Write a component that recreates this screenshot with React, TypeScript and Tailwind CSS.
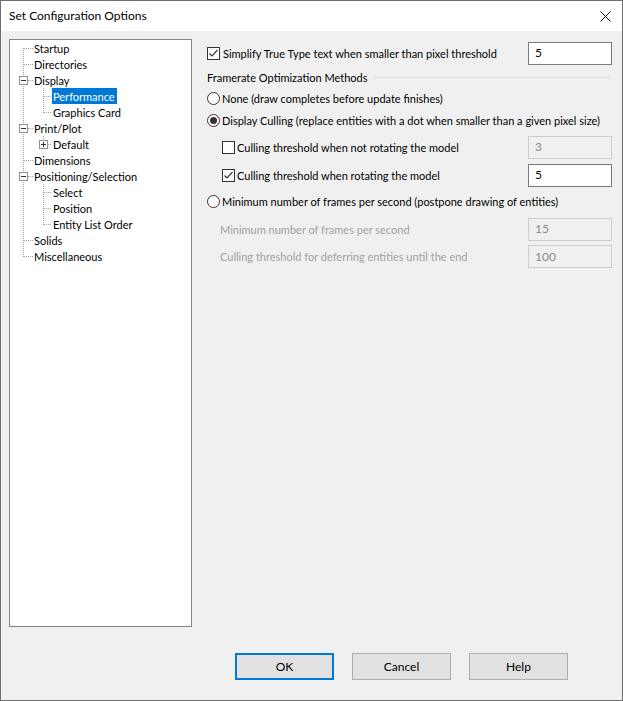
import React from 'react';

const FONT = { fontFamily: '"Segoe UI", Lato, sans-serif' };

type Row = {
  label: string;
  level: 0 | 1;
  root: 'first' | 'mid' | 'last';
  box?: 'minus' | 'plus';
  childDown?: boolean;
  child?: 'mid' | 'last' | 'toBox';
  selected?: boolean;
};

const rows: Row[] = [
  { label: 'Startup', level: 0, root: 'first' },
  { label: 'Directories', level: 0, root: 'mid' },
  { label: 'Display', level: 0, root: 'mid', box: 'minus', childDown: true },
  { label: 'Performance', level: 1, root: 'mid', child: 'mid', selected: true },
  { label: 'Graphics Card', level: 1, root: 'mid', child: 'last' },
  { label: 'Print/Plot', level: 0, root: 'mid', box: 'minus', childDown: true },
  { label: 'Default', level: 1, root: 'mid', child: 'toBox', box: 'plus' },
  { label: 'Dimensions', level: 0, root: 'mid' },
  { label: 'Positioning/Selection', level: 0, root: 'mid', box: 'minus', childDown: true },
  { label: 'Select', level: 1, root: 'mid', child: 'mid' },
  { label: 'Position', level: 1, root: 'mid', child: 'mid' },
  { label: 'Entity List Order', level: 1, root: 'mid', child: 'last' },
  { label: 'Solids', level: 0, root: 'mid' },
  { label: 'Miscellaneous', level: 0, root: 'last' },
];

function ExpandBox({ x, kind }: { x: number; kind: 'minus' | 'plus' }) {
  return (
    <g>
      <rect x={x + 0.5} y={4.5} width={8} height={8} fill="#fff" stroke="#919191" />
      <line x1={x + 2} y1={8.5} x2={x + 7} y2={8.5} stroke="#333" />
      {kind === 'plus' && <line x1={x + 4.5} y1={6} x2={x + 4.5} y2={11} stroke="#333" />}
    </g>
  );
}

function TreeLines({ row }: { row: Row }) {
  const w = row.level === 0 ? 23 : 42;
  const dot = { stroke: '#a0a0a0', strokeDasharray: '1 1' };
  const rootY1 = row.root === 'first' ? 8 : 0;
  const rootY2 = row.root === 'last' ? 9 : 16;
  return (
    <svg width={w} height={16} className="shrink-0" shapeRendering="crispEdges">
      <line x1={13.5} y1={rootY1} x2={13.5} y2={rootY2} {...dot} />
      {row.level === 0 && <line x1={14} y1={8.5} x2={23} y2={8.5} {...dot} />}
      {row.level === 0 && row.childDown && <line x1={33.5} y1={12} x2={33.5} y2={16} {...dot} />}
      {row.level === 0 && row.box && <ExpandBox x={9} kind={row.box} />}
      {row.level === 1 && row.child === 'mid' && <line x1={33.5} y1={0} x2={33.5} y2={16} {...dot} />}
      {row.level === 1 && row.child === 'last' && <line x1={33.5} y1={0} x2={33.5} y2={9} {...dot} />}
      {row.level === 1 && row.child === 'toBox' && <line x1={33.5} y1={0} x2={33.5} y2={4} {...dot} />}
      {row.level === 1 && (
        <line x1={row.box ? 38 : 34} y1={8.5} x2={42} y2={8.5} {...dot} />
      )}
      {row.level === 1 && row.box && <ExpandBox x={29} kind={row.box} />}
    </svg>
  );
}

function Checkbox({ checked }: { checked?: boolean }) {
  return (
    <span className="w-[13px] h-[13px] shrink-0 border border-[#333] bg-white flex items-center justify-center">
      {checked && (
        <svg width="11" height="11" viewBox="0 0 11 11">
          <path d="M1.5 5.5 L4 8 L9.5 2" fill="none" stroke="#333" strokeWidth="1.2" />
        </svg>
      )}
    </span>
  );
}

function Radio({ checked }: { checked?: boolean }) {
  return (
    <span className="w-[13px] h-[13px] shrink-0 rounded-full border border-[#333] bg-white flex items-center justify-center">
      {checked && <span className="w-[7px] h-[7px] rounded-full bg-[#333]" />}
    </span>
  );
}

function Field({ value, disabled }: { value: string; disabled?: boolean }) {
  return (
    <div
      className={`ml-auto w-[84px] h-[23px] shrink-0 flex items-center pl-[6px] border text-[12px] ${
        disabled ? 'border-[#cccccc] bg-[#f0f0f0] text-[#8a8a8a]' : 'border-[#7a7a7a] bg-white text-black'
      }`}
    >
      {value}
    </div>
  );
}

function Button({ label, primary }: { label: string; primary?: boolean }) {
  return (
    <div
      className={`w-[99px] h-[27px] flex items-center justify-center bg-[#e1e1e1] text-[12px] ${
        primary ? 'border-2 border-[#0078d7]' : 'border border-[#adadad]'
      }`}
    >
      {label}
    </div>
  );
}

export default function App() {
  return (
    <div
      className="w-[623px] h-[701px] border border-[#707070] flex flex-col text-[11px] text-black leading-none select-none whitespace-nowrap"
      style={FONT}
    >
      <div className="h-[30px] shrink-0 bg-white flex items-center pl-[8px] pr-[11px]">
        <span className="text-[12px]">Set Configuration Options</span>
        <svg className="ml-auto" width="11" height="11" viewBox="0 0 11 11">
          <path d="M0.5 0.5 L10.5 10.5 M10.5 0.5 L0.5 10.5" stroke="#111" strokeWidth="1" />
        </svg>
      </div>

      <div className="flex-1 bg-[#f0f0f0] flex flex-col pt-[8px]">
        <div className="flex pl-[8px] pr-[10px]">
          <div className="w-[183px] h-[588px] border border-[#82828a] bg-white shrink-0">
            {rows.map((r) => (
              <div key={r.label} className="flex h-[16px] items-center">
                <TreeLines row={r} />
                <span
                  className={`h-[16px] flex items-center pl-[1px] pr-[2px] ${
                    r.selected ? 'bg-[#0078d7] text-white' : ''
                  }`}
                >
                  {r.label}
                </span>
              </div>
            ))}
          </div>

          <div className="flex-1 min-w-0 ml-[15px] flex flex-col pt-[2px]">
            <div className="h-[24px] flex items-center">
              <Checkbox checked />
              <span className="ml-[3px]">Simplify True Type text when smaller than pixel threshold</span>
              <Field value="5" />
            </div>
            <div className="h-[24px] flex items-center">
              <span>Framerate Optimization Methods</span>
              <div className="flex-1 h-px bg-[#dcdcdc] ml-[6px] mr-[1px]" />
            </div>
            <div className="h-[18px] flex items-center">
              <Radio />
              <span className="ml-[2px]">None (draw completes before update finishes)</span>
            </div>
            <div className="h-[26px] flex items-center">
              <Radio checked />
              <span className="ml-[2px]">Display Culling (replace entities with a dot when smaller than a given pixel size)</span>
            </div>
            <div className="h-[28px] flex items-center pl-[15px]">
              <Checkbox />
              <span className="ml-[2px]">Culling threshold when not rotating the model</span>
              <Field value="3" disabled />
            </div>
            <div className="h-[28px] flex items-center pl-[15px]">
              <Checkbox checked />
              <span className="ml-[2px]">Culling threshold when rotating the model</span>
              <Field value="5" />
            </div>
            <div className="h-[24px] flex items-center">
              <Radio />
              <span className="ml-[2px]">Minimum number of frames per second (postpone drawing of entities)</span>
            </div>
            <div className="h-[32px] flex items-center pl-[13px] text-[#a0a0a0]">
              <span>Minimum number of frames per second</span>
              <Field value="15" disabled />
            </div>
            <div className="h-[23px] flex items-center pl-[13px] text-[#a0a0a0]">
              <span>Culling threshold for deferring entities until the end</span>
              <Field value="100" disabled />
            </div>
          </div>
        </div>

        <div className="flex mt-[26px] pl-[234px] gap-[18px]">
          <Button label="OK" primary />
          <Button label="Cancel" />
          <Button label="Help" />
        </div>
      </div>
    </div>
  );
}
